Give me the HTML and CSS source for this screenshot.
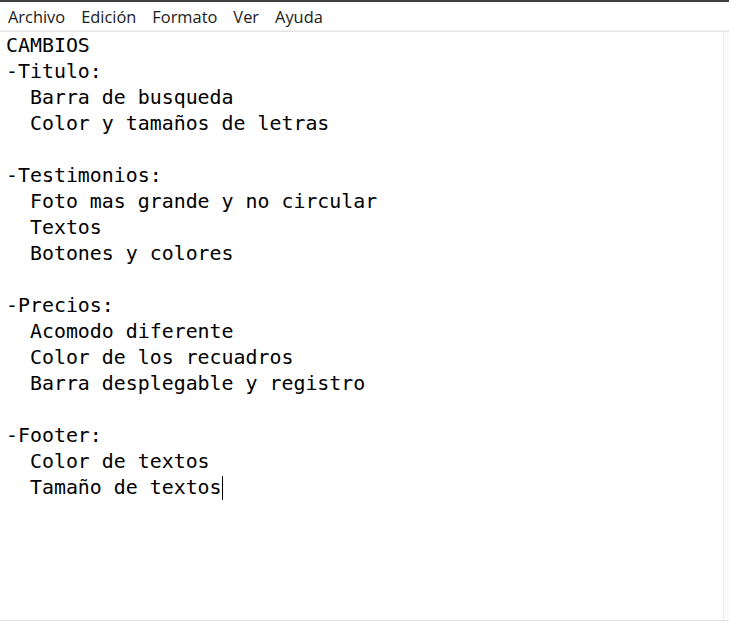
FILE: index.html
```html
<!DOCTYPE html>
<html lang="es">
<head>
<meta charset="utf-8">
<title>CAMBIOS - Bloc de notas</title>
<link rel="stylesheet" href="styles.css">
</head>
<body>
<div class="window">
  <div class="titlebar"></div>
  <nav class="menubar">
    <span class="menu-item">Archivo</span>
    <span class="menu-item">Edición</span>
    <span class="menu-item">Formato</span>
    <span class="menu-item">Ver</span>
    <span class="menu-item">Ayuda</span>
  </nav>
  <div class="editor-frame">
    <pre class="editor">CAMBIOS
-Titulo:
  Barra de busqueda
  Color y tamaños de letras

-Testimonios:
  Foto mas grande y no circular
  Textos
  Botones y colores

-Precios:
  Acomodo diferente
  Color de los recuadros
  Barra desplegable y registro

-Footer:
  Color de textos
  Tamaño de textos<span class="caret"></span></pre>
    <div class="scroll-edge"></div>
  </div>
</div>
</body>
</html>
```
FILE: styles.css
```css
html, body {
  margin: 0;
  padding: 0;
  background: #ffffff;
}

.window {
  width: 729px;
  height: 623px;
  display: flex;
  flex-direction: column;
  background: #ffffff;
  overflow: hidden;
}

.titlebar {
  height: 2px;
  background: #3f3f3f;
  flex: none;
}

.menubar {
  height: 28px;
  flex: none;
  display: flex;
  align-items: center;
  gap: 16px;
  padding-left: 8px;
  border-bottom: 1px solid #f0f0f0;
  font-family: "Open Sans", "Noto Sans", sans-serif;
  font-size: 16.4px;
  color: #1a1a1a;
}

.menu-item {
  line-height: 22px;
  padding-top: 2px;
}

.editor-frame {
  flex: 1;
  display: flex;
  border-top: 1px solid #e4e4e4;
  border-bottom: 1px solid #e2e2e2;
  margin-bottom: 2px;
}

.editor {
  flex: 1;
  margin: 0;
  padding: 1px 0 0 6px;
  font-family: "DejaVu Sans Mono", "Liberation Mono", monospace;
  font-size: 19.9px;
  line-height: 26px;
  color: #000000;
  white-space: pre;
}

.caret {
  display: inline-block;
  width: 1px;
  height: 24px;
  background: #000000;
  vertical-align: -6px;
}

.scroll-edge {
  width: 5px;
  flex: none;
  border-left: 1px solid #ececec;
  background: #fbfbfb;
}
```
